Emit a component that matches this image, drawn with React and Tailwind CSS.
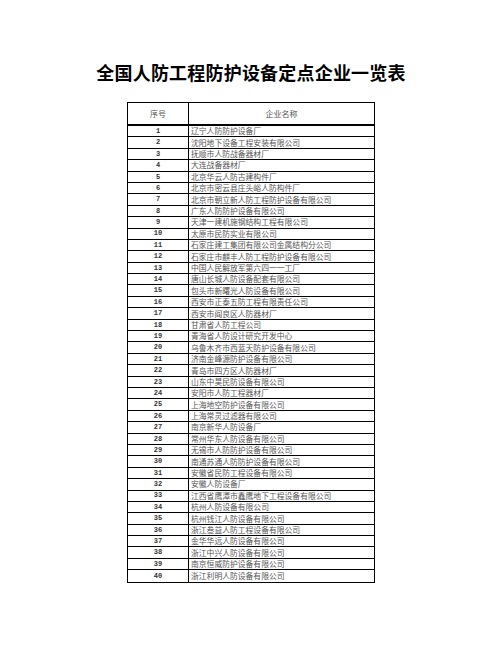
import React from "react";

const names = [
  "辽宁人防防护设备厂",
  "沈阳地下设备工程安装有限公司",
  "抚顺市人防战备器材厂",
  "大连战备器材厂",
  "北京华云人防古建构件厂",
  "北京市密云县庄头峪人防构件厂",
  "北京市朝立新人防工程防护设备有限公司",
  "广东人防防护设备有限公司",
  "天津一建机施钢结构工程有限公司",
  "太原市民防实业有限公司",
  "石家庄建工集团有限公司金属结构分公司",
  "石家庄市麒丰人防工程防护设备有限公司",
  "中国人民解放军第六四一一工厂",
  "唐山长城人防设备配套有限公司",
  "包头市新曙光人防设备有限公司",
  "西安市正泰五防工程有限责任公司",
  "西安市阎良区人防器材厂",
  "甘肃省人防工程公司",
  "青海省人防设计研究开发中心",
  "乌鲁木齐市西蓝天防护设备有限公司",
  "济南金峰源防护设备有限公司",
  "青岛市四方区人防器材厂",
  "山东中昊民防设备有限公司",
  "安阳市人防工程器材厂",
  "上海地空防护设备有限公司",
  "上海常灵过滤器有限公司",
  "南京新华人防设备厂",
  "常州华东人防设备有限公司",
  "无锡市人防防护设备有限公司",
  "南通苏通人防防护设备有限公司",
  "安徽省民防工程设备有限公司",
  "安徽人防设备厂",
  "江西省鹰潭市鑫鹰地下工程设备有限公司",
  "杭州人防设备有限公司",
  "杭州钱江人防设备有限公司",
  "浙江叁益人防工程设备有限公司",
  "金华华远人防设备有限公司",
  "浙江中兴人防设备有限公司",
  "南京恒威防护设备有限公司",
  "浙江利明人防设备有限公司",
];

export default function App() {
  return (
    <div className="w-[502px] h-[649px] bg-white flex flex-col items-center font-['Noto_Sans_CJK_SC',sans-serif]">
      <h1 className="mt-[62px] text-[18px] leading-[20px] font-bold text-black tracking-[0.2px]">
        全国人防工程防护设备定点企业一览表
      </h1>
      <div className="mt-[20px] w-[248px] border border-black">
        <div className="flex h-[23px] border-b-2 border-black text-[8px] text-[#555]">
          <div className="w-[61px] border-r border-black flex items-center justify-center">
            序号
          </div>
          <div className="flex-1 flex items-center justify-center">企业名称</div>
        </div>
        {names.map((n, i) => (
          <div
            key={i}
            className={
              i < names.length - 1
                ? "flex h-[11.4px] border-b border-black"
                : "flex h-[11.4px]"
            }
          >
            <div className="w-[61px] border-r border-black flex items-center justify-center text-[7px] font-bold text-[#333] font-['Liberation_Mono',monospace]">
              {i + 1}
            </div>
            <div className="flex-1 flex items-center pl-[2px] text-[7.8px] leading-none text-[#555] whitespace-nowrap overflow-hidden">
              {n}
            </div>
          </div>
        ))}
      </div>
    </div>
  );
}
